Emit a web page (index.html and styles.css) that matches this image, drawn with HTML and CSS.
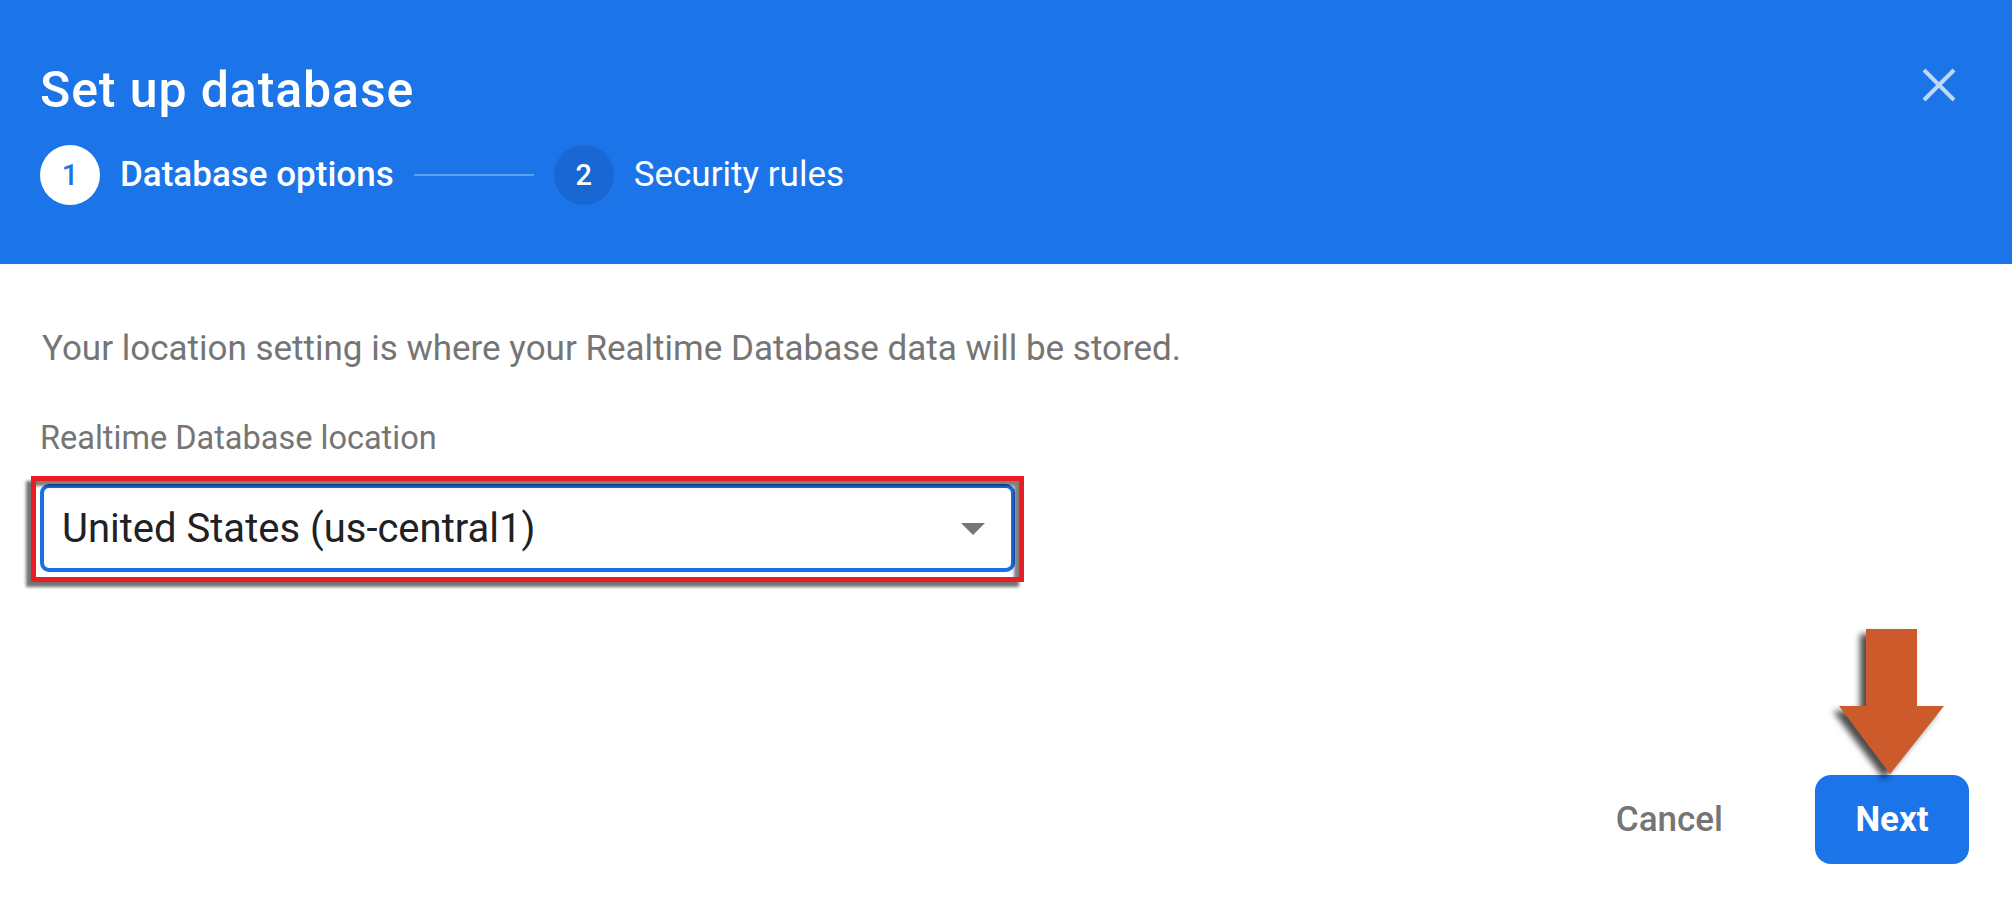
FILE: index.html
```html
<!DOCTYPE html>
<html lang="en">
<head>
<meta charset="utf-8">
<title>Set up database</title>
<link rel="stylesheet" href="styles.css">
</head>
<body>
<div class="page">
  <header class="dialog-header">
    <div class="title-row">
      <h1 class="title">Set up database</h1>
      <button class="close-btn" aria-label="Close">
        <svg viewBox="0 0 34 34" width="34" height="34"><path d="M2 2 L32 32 M32 2 L2 32" stroke="#c0d8f8" stroke-width="4" fill="none"/></svg>
      </button>
    </div>
    <div class="stepper">
      <div class="step step-active">
        <span class="step-num">1</span>
        <span class="step-label">Database options</span>
      </div>
      <div class="step-line"></div>
      <div class="step step-next">
        <span class="step-num">2</span>
        <span class="step-label">Security rules</span>
      </div>
    </div>
  </header>

  <main class="dialog-body">
    <p class="intro">Your location setting is where your Realtime Database data will be stored.</p>
    <div class="field-label">Realtime Database location</div>
    <div class="select-wrap">
      <div class="select">
        <span class="select-value">United States (us-central1)</span>
        <span class="caret"></span>
      </div>
      <div class="highlight-frame"></div>
    </div>
  </main>

  <footer class="dialog-footer">
    <button class="btn btn-cancel">Cancel</button>
    <button class="btn btn-next">Next</button>
  </footer>

  <svg class="pointer-arrow" width="125" height="160" viewBox="0 0 125 160">
    <polygon points="36,4 87,4 87,81 114,81 60,149 9,81 36,81" fill="#cd5a2a"/>
  </svg>
</div>
</body>
</html>
```

FILE: styles.css
```css
* { box-sizing: border-box; }

html, body {
  margin: 0;
  padding: 0;
  background: #ffffff;
}

body {
  font-family: Roboto, "Liberation Sans", Arial, sans-serif;
}

.page {
  position: relative;
  width: 2012px;
  height: 917px;
  overflow: hidden;
}

/* Header */
.dialog-header {
  height: 264px;
  background: #1b74e8;
  padding: 60px 49px 0 40px;
  color: #ffffff;
}

.title-row {
  display: flex;
  justify-content: space-between;
  align-items: flex-start;
}

.title {
  margin: 0;
  font-size: 50px;
  line-height: 60px;
  font-weight: 500;
  letter-spacing: 0.9px;
}

.close-btn {
  width: 48px;
  height: 48px;
  margin-top: 1px;
  padding: 0;
  border: 0;
  background: transparent;
  display: flex;
  align-items: center;
  justify-content: center;
  cursor: pointer;
}

.stepper {
  margin-top: 25px;
  height: 60px;
  display: flex;
  align-items: center;
  gap: 20px;
}

.step {
  display: flex;
  align-items: center;
  gap: 20px;
}

.step-num {
  width: 60px;
  height: 60px;
  border-radius: 50%;
  display: flex;
  align-items: center;
  justify-content: center;
  font-size: 29px;
  font-weight: 500;
}

.step-active .step-num {
  background: #ffffff;
  color: #1b74e8;
}

.step-next .step-num {
  background: #1967d2;
  color: #ffffff;
}

.step-label {
  font-size: 35px;
  line-height: 44px;
}

.step-active .step-label { font-weight: 500; }
.step-next .step-label { font-weight: 400; }

.step-line {
  width: 120px;
  height: 2px;
  background: #5f9ef0;
}

/* Body */
.dialog-body {
  padding: 63px 40px 0 40px;
}

.intro {
  margin: 0;
  padding-left: 2px;
  font-size: 35px;
  line-height: 44px;
  color: #757575;
}

.field-label {
  margin-top: 47px;
  font-size: 32.5px;
  line-height: 40px;
  color: #757575;
}

.select-wrap {
  position: relative;
  margin-top: 26px;
  width: 975px;
}

.select {
  height: 88px;
  border: 4px solid #1a6ee6;
  border-radius: 9px;
  background: #ffffff;
  display: flex;
  align-items: center;
  justify-content: space-between;
  padding: 0 26px 0 18px;
}

.select-value {
  font-size: 40px;
  color: #202124;
}

.caret {
  width: 0;
  height: 0;
  border-left: 12.5px solid transparent;
  border-right: 12.5px solid transparent;
  border-top: 12px solid #757575;
  margin-top: 2px;
}

.highlight-frame {
  position: absolute;
  top: -8px;
  left: -9px;
  right: -9px;
  bottom: -10px;
  border: 5px solid #ec1c24;
  box-shadow: -5px 5px 3px rgba(0, 0, 0, 0.55), inset -5px 5px 3px rgba(0, 0, 0, 0.5);
  pointer-events: none;
}

/* Footer */
.dialog-footer {
  margin-top: 203px;
  padding-right: 43px;
  display: flex;
  justify-content: flex-end;
  gap: 51px;
}

.btn {
  height: 89px;
  padding: 0 41px;
  border: 0;
  border-radius: 16px;
  font-family: Roboto, "Liberation Sans", Arial, sans-serif;
  font-size: 35px;
  cursor: pointer;
}

.btn-cancel {
  background: transparent;
  color: #757575;
  font-weight: 500;
}

.btn-next {
  width: 154px;
  padding: 0;
  background: #1b74e8;
  color: #ffffff;
  font-weight: 700;
}

/* Annotation arrow */
.pointer-arrow {
  position: absolute;
  left: 1830px;
  top: 625px;
  overflow: visible;
  filter: drop-shadow(-6px 5px 3px rgba(0, 0, 0, 0.7));
}
```
